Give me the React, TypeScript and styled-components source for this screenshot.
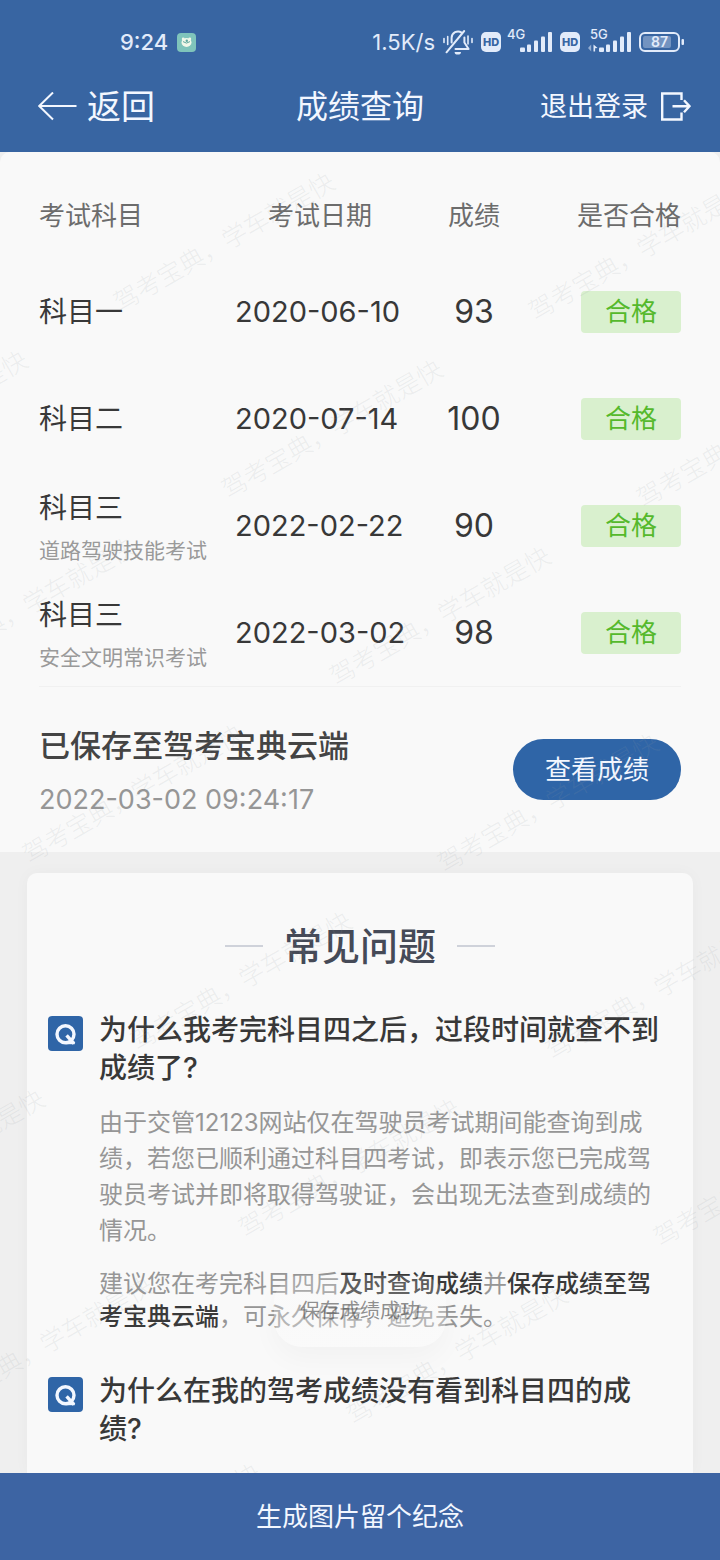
import React from "react";
import styled, { createGlobalStyle } from "styled-components";

const GlobalStyle = createGlobalStyle`
  * { box-sizing: border-box; }
  body {
    margin: 0;
    background: #efefef;
    font-family: Inter, "Noto Sans CJK SC", sans-serif;
    color: #383838;
  }
  button { font: inherit; border: 0; background: none; padding: 0; cursor: pointer; }
  h1, h2, h3, p { margin: 0; font-weight: 400; }
`;

const Page = styled.div`
  position: relative;
  display: flex;
  flex-direction: column;
  min-height: 100vh;
`;

const Header = styled.header`
  background: #3865a2;
  color: #f3f7ff;
`;

const StatusBar = styled.div`
  display: flex;
  align-items: center;
  justify-content: space-between;
  height: 62px;
  padding: 22px 36px 0 120px;
  font-size: 22px;
  line-height: 28px;
  color: #e2ebfa;
`;

const StatusGroup = styled.div<{ $gap: number }>`
  display: flex;
  align-items: center;
  gap: ${(p) => p.$gap}px;
`;

const Clock = styled.span`
  font-weight: 500;
`;

const HdBadge = styled.span`
  width: 20px;
  height: 20px;
  border-radius: 5px;
  background: #e2ebfa;
  color: #3865a2;
  font-size: 11px;
  font-weight: 800;
  line-height: 20px;
  text-align: center;
`;

const SignalBox = styled.span`
  position: relative;
  display: flex;
  justify-content: flex-end;
  width: 43px;
  height: 20px;
`;

const SignalLabel = styled.span<{ $left: number }>`
  position: absolute;
  left: ${(p) => p.$left}px;
  top: -5px;
  font-size: 13px;
  font-weight: 500;
  line-height: 14px;
`;

const BatteryBox = styled.span`
  position: relative;
  display: flex;
  width: 45px;
  height: 20px;
`;

const BatteryLevel = styled.span`
  position: absolute;
  left: 0;
  top: 0;
  width: 41px;
  font-size: 14px;
  font-weight: 600;
  line-height: 20px;
  text-align: center;
`;

const NavBar = styled.nav`
  display: grid;
  grid-template-columns: 1fr auto 1fr;
  align-items: center;
  height: 90px;
  padding: 0 29px;
`;

const NavTitle = styled.h1`
  font-size: 32px;
  line-height: 42px;
`;

const BackButton = styled.button`
  display: flex;
  align-items: center;
  justify-self: start;
  gap: 10px;
  margin-left: 8px;
  color: inherit;
  font-size: 34px;
  line-height: 42px;
`;

const LogoutButton = styled.button`
  display: flex;
  align-items: center;
  justify-self: end;
  gap: 12px;
  color: inherit;
  font-size: 27px;
  line-height: 42px;
`;

const Main = styled.main`
  position: relative;
  flex: 1;
  display: flex;
  flex-direction: column;
  gap: 21px;
`;

const Sheet = styled.section`
  padding: 22px 39px 26px;
  border-radius: 10px 10px 0 0;
  background: #f9f9f9;
`;

const ScoreTable = styled.table`
  width: 100%;
  table-layout: fixed;
  border-collapse: collapse;
`;

const HeadCell = styled.th<{ $align?: string; $width?: number }>`
  width: ${(p) => (p.$width ? `${p.$width}px` : "auto")};
  height: 84px;
  padding: 0;
  color: #6c6c6c;
  font-size: 26px;
  font-weight: 400;
  line-height: 36px;
  text-align: ${(p) => p.$align ?? "left"};
`;

const Cell = styled.td<{ $align?: string; $size?: number }>`
  height: 107px;
  padding: 0;
  font-size: ${(p) => p.$size ?? 28}px;
  line-height: 50px;
  text-align: ${(p) => p.$align ?? "left"};
  white-space: nowrap;
`;

const SubjectNote = styled.div`
  color: #9a9a9a;
  font-size: 21px;
  line-height: 36px;
`;

const PassBadge = styled.span`
  display: block;
  width: 100px;
  margin-left: auto;
  border-radius: 4px;
  background: #d9f0ce;
  color: #55b92c;
  font-size: 26px;
  line-height: 42px;
  text-align: center;
`;

const SavedRow = styled.div`
  display: flex;
  align-items: center;
  justify-content: space-between;
  padding-top: 26px;
  border-top: 1px solid #f1f1f1;
`;

const SavedInfo = styled.div`
  padding-top: 5px;
`;

const SavedTitle = styled.h2`
  color: #444;
  font-size: 31px;
  font-weight: 500;
  line-height: 56px;
`;

const SavedTime = styled.time`
  display: block;
  color: #969696;
  font-size: 27px;
  line-height: 52px;
`;

const ViewButton = styled.button`
  width: 168px;
  border-radius: 31px;
  background: #2f65a7;
  color: #f3f7ff;
  font-size: 26px;
  line-height: 61px;
`;

const FaqCard = styled.section`
  flex: 1;
  margin: 0 27px;
  padding: 45px 30px 24px 21px;
  border-radius: 10px 10px 0 0;
  background: #f9f9f9;
  box-shadow: 0 0 16px rgba(0, 0, 0, 0.03);
`;

const FaqTitle = styled.h2`
  display: flex;
  align-items: center;
  justify-content: center;
  gap: 21px;
  margin: 0 0 37px 9px;
  color: #454a57;
  font-size: 38px;
  font-weight: 500;
  line-height: 56px;

  &::before,
  &::after {
    content: "";
    width: 38px;
    height: 2px;
    background: #cfd2da;
  }
`;

const FaqItem = styled.article`
  display: flex;
  align-items: flex-start;
  gap: 16px;

  & + & {
    margin-top: 39px;
  }
`;

const QBadge = styled.span`
  display: flex;
  flex: none;
  margin-top: 5px;
  border-radius: 4px;
  background: #2f65a7;
`;

const FaqBody = styled.div`
  flex: 1;
`;

const Question = styled.h3`
  font-size: 28px;
  font-weight: 500;
  line-height: 38px;
`;

const Answer = styled.p<{ $line: number }>`
  margin-top: 18px;
  color: #969696;
  font-size: 24px;
  line-height: ${(p) => p.$line}px;

  strong {
    color: #3a3a3a;
    font-weight: 500;
  }
`;

const WatermarkLayer = styled.div`
  position: absolute;
  inset: 0;
  overflow: hidden;
  pointer-events: none;
`;

const WatermarkText = styled.span`
  position: absolute;
  transform: translate(-50%, -50%) rotate(-30deg);
  color: rgba(145, 155, 163, 0.14);
  font-size: 25px;
  font-weight: 300;
  line-height: 30px;
  white-space: nowrap;
`;

const Toast = styled.div`
  position: absolute;
  left: 50%;
  bottom: 213px;
  transform: translateX(-50%);
  padding: 0 26px;
  border-radius: 28px;
  background: linear-gradient(rgba(251, 251, 251, 0.15), rgba(251, 251, 251, 0.4));
  box-shadow: 0 12px 28px rgba(0, 0, 0, 0.03);
  color: rgba(70, 70, 70, 0.6);
  font-size: 20px;
  line-height: 72px;
  white-space: nowrap;
`;

const BottomButton = styled.button`
  position: relative;
  width: 100%;
  background: #3d64a3;
  color: #f3f7ff;
  font-size: 26px;
  line-height: 87px;
`;

function AppIcon() {
  return (
    <svg width="19" height="19" viewBox="0 0 19 19" aria-hidden="true">
      <rect width="19" height="19" rx="4" fill="#7fc4bb" />
      <circle cx="6.2" cy="6" r="1.4" fill="#f2f8ea" />
      <circle cx="12.8" cy="6" r="1.4" fill="#f2f8ea" />
      <ellipse cx="9.5" cy="9.4" rx="5" ry="4.5" fill="#f2f8ea" />
      <path d="M6 8.600q3.500 3 7 0" stroke="#5fa79e" strokeWidth="1" fill="none" />
      <circle cx="9.800" cy="7.800" r="1.200" fill="#5fa79e" />
    </svg>
  );
}

function MutedBell() {
  return (
    <svg width="30" height="28" viewBox="0 0 30 28" fill="none" stroke="#e2ebfa" strokeWidth="2" strokeLinecap="round" aria-hidden="true">
      <path d="M1 10.5v4M4.7 8.5v8M25 8v8M29 10.5v4" strokeWidth="1.6" />
      <path d="M8.6 14.5V9.8A6.4 6.4 0 0 1 18.6 4.6" />
      <path d="M21.4 9.5v5l4.2 6.5H12.5" strokeLinejoin="round" />
      <path d="M3.5 24.3L21.2 3" />
      <path d="M11.6 24h6.4a3.2 2.6 0 0 1-6.4 0z" fill="#e2ebfa" stroke="none" />
    </svg>
  );
}

function Signal({ label, data }: { label: string; data?: boolean }) {
  return (
    <SignalBox>
      <SignalLabel $left={data ? 2 : -2}>{label}</SignalLabel>
      <svg width="43" height="20" viewBox="0 0 43 20" fill="#e2ebfa" aria-hidden="true">
        {data && (
          <>
            <path d="M3.2 12.5v7L0 16z" opacity=".55" />
            <path d="M5.5 12.5v7h1.6v-3.2L9.600 16z" />
          </>
        )}
        <rect x="11" y="15.5" width="5" height="4.5" rx="1" />
        <rect x="18" y="12.5" width="4" height="7.5" rx="1" />
        <rect x="25" y="8.5" width="4" height="11.5" rx="1" />
        <rect x="32" y="4.5" width="4" height="15.5" rx="1" />
        <rect x="39" y="0" width="4" height="20" rx="1" />
      </svg>
    </SignalBox>
  );
}

function Battery({ level }: { level: number }) {
  return (
    <BatteryBox>
      <svg width="45" height="20" viewBox="0 0 45 20" aria-hidden="true">
        <rect x="1" y="1" width="39" height="18" rx="5" fill="none" stroke="#e2ebfa" strokeWidth="2" />
        <rect x="4" y="4" width="28" height="12" rx="2" fill="#e2ebfa" opacity=".35" />
        <rect x="42.500" y="7" width="2.500" height="6" rx="1" fill="#e2ebfa" />
      </svg>
      <BatteryLevel>{level}</BatteryLevel>
    </BatteryBox>
  );
}

function BackArrow() {
  return (
    <svg width="40" height="30" viewBox="0 0 40 30" fill="none" stroke="currentColor" strokeWidth="2" aria-hidden="true">
      <path d="M39.500 14H2M16 0.500L2.200 14 16 27.500" />
    </svg>
  );
}

function LogoutIcon() {
  return (
    <svg width="31" height="30" viewBox="0 0 31 30" fill="none" stroke="currentColor" strokeWidth="2.400" aria-hidden="true">
      <path d="M21.500 8V1.500H2.200v26H21.500v-7" />
      <path d="M12.500 14.200H29M24 8.200l5.500 6L24 20.200" />
    </svg>
  );
}

function QIcon() {
  return (
    <QBadge>
      <svg width="35" height="35" viewBox="0 0 35 35" fill="none" stroke="#f3f7ff" strokeWidth="3.400" aria-hidden="true">
        <circle cx="17.500" cy="18.200" r="8.500" />
        <path d="M18.600 19.400l7.400 8.200" />
        <path d="M18 27h8.800" strokeWidth="2.400" />
      </svg>
    </QBadge>
  );
}

const results = [
  { subject: "科目一", date: "2020-06-10", score: 93 },
  { subject: "科目二", date: "2020-07-14", score: 100 },
  { subject: "科目三", note: "道路驾驶技能考试", date: "2022-02-22", score: 90 },
  { subject: "科目三", note: "安全文明常识考试", date: "2022-03-02", score: 98 },
];

// Each row of the watermark is shifted to the right of the one above it.
const watermarks = Array.from({ length: 8 }, (_, row) =>
  Array.from({ length: 5 }, (_, col) => ({
    x: 224 + row * 108 + (col - 3) * 415,
    y: 90 + row * 187 + (col - 3) * 9,
  })),
)
  .flat()
  .filter((mark) => mark.x > -130 && mark.x < 850);

function Watermark() {
  return (
    <WatermarkLayer aria-hidden="true">
      {watermarks.map((mark) => (
        <WatermarkText key={`${mark.x},${mark.y}`} style={{ left: mark.x, top: mark.y }}>
          驾考宝典，学车就是快
        </WatermarkText>
      ))}
    </WatermarkLayer>
  );
}

export default function App() {
  return (
    <Page>
      <GlobalStyle />
      <Header>
        <StatusBar>
          <StatusGroup $gap={9}>
            <Clock>9:24</Clock>
            <AppIcon />
          </StatusGroup>
          <StatusGroup $gap={8}>
            <span>1.5K/s</span>
            <MutedBell />
            <HdBadge>HD</HdBadge>
            <Signal label="4G" />
            <HdBadge>HD</HdBadge>
            <Signal label="5G" data />
            <Battery level={87} />
          </StatusGroup>
        </StatusBar>
        <NavBar>
          <BackButton type="button">
            <BackArrow />
            返回
          </BackButton>
          <NavTitle>成绩查询</NavTitle>
          <LogoutButton type="button">
            退出登录
            <LogoutIcon />
          </LogoutButton>
        </NavBar>
      </Header>

      <Main>
        <Sheet>
          <ScoreTable>
            <thead>
              <tr>
                <HeadCell $width={196}>考试科目</HeadCell>
                <HeadCell $width={170} $align="center">考试日期</HeadCell>
                <HeadCell $align="center">成绩</HeadCell>
                <HeadCell $align="right">是否合格</HeadCell>
              </tr>
            </thead>
            <tbody>
              {results.map((r) => (
                <tr key={r.date}>
                  <Cell>
                    {r.subject}
                    {r.note && <SubjectNote>{r.note}</SubjectNote>}
                  </Cell>
                  <Cell $size={29}>{r.date}</Cell>
                  <Cell $align="center" $size={32}>{r.score}</Cell>
                  <Cell>
                    <PassBadge>合格</PassBadge>
                  </Cell>
                </tr>
              ))}
            </tbody>
          </ScoreTable>
          <SavedRow>
            <SavedInfo>
              <SavedTitle>已保存至驾考宝典云端</SavedTitle>
              <SavedTime>2022-03-02 09:24:17</SavedTime>
            </SavedInfo>
            <ViewButton type="button">查看成绩</ViewButton>
          </SavedRow>
        </Sheet>

        <FaqCard>
          <FaqTitle>常见问题</FaqTitle>
          <FaqItem>
            <QIcon />
            <FaqBody>
              <Question>为什么我考完科目四之后，过段时间就查不到成绩了?</Question>
              <Answer $line={36}>
                由于交管12123网站仅在驾驶员考试期间能查询到成绩，若您已顺利通过科目四考试，即表示您已完成驾驶员考试并即将取得驾驶证，会出现无法查到成绩的情况。
              </Answer>
              <Answer $line={33}>
                建议您在考完科目四后<strong>及时查询成绩</strong>并<strong>保存成绩至驾考宝典云端</strong>，可永久保存，避免丢失。
              </Answer>
            </FaqBody>
          </FaqItem>
          <FaqItem>
            <QIcon />
            <FaqBody>
              <Question>为什么在我的驾考成绩没有看到科目四的成绩?</Question>
            </FaqBody>
          </FaqItem>
        </FaqCard>
        <Watermark />
      </Main>

      <BottomButton type="button">生成图片留个纪念</BottomButton>
      <Toast role="status">保存成绩成功</Toast>
    </Page>
  );
}
